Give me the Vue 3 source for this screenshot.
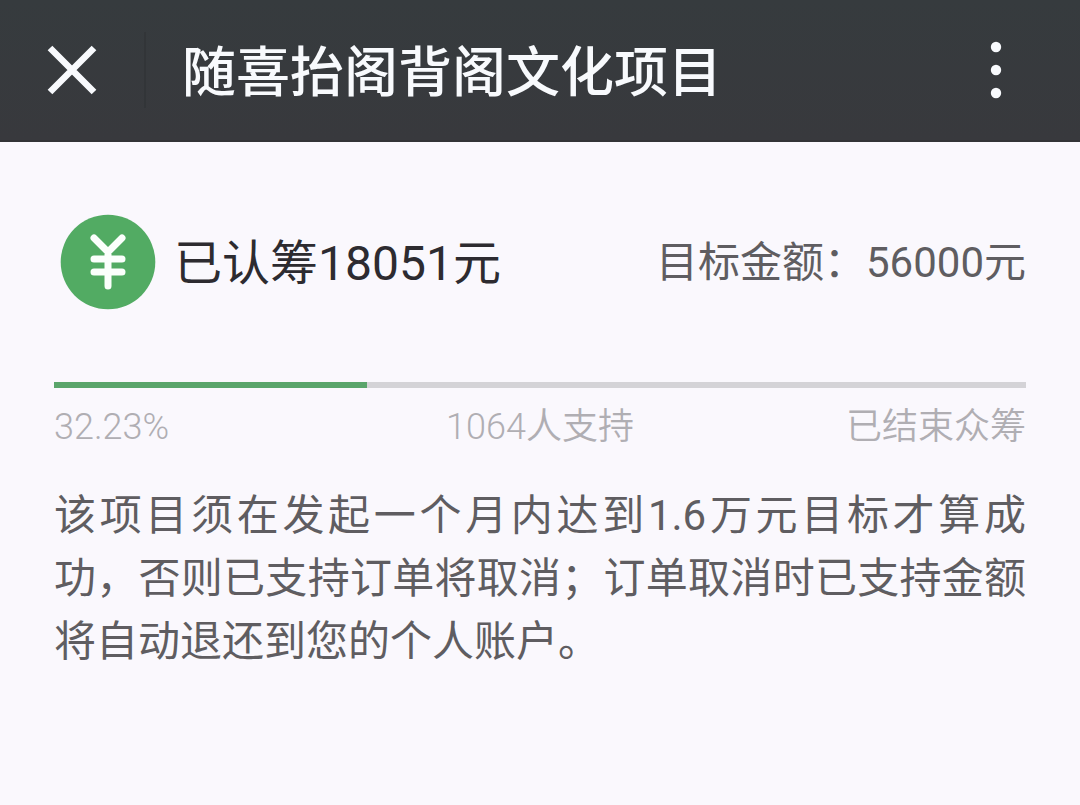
<script setup>
const title = '随喜抬阁背阁文化项目'
const raised = 18051
const goal = 56000
const backers = 1064
const percent = ((raised / goal) * 100).toFixed(2)
</script>

<template>
  <div class="page">
    <header class="bar">
      <button class="close" type="button" aria-label="关闭">
        <svg width="50" height="50" viewBox="0 0 50 50" fill="none" stroke="currentColor" stroke-width="6.6">
          <path d="M3 3 47 47M47 3 3 47" />
        </svg>
      </button>
      <h1 class="title">{{ title }}</h1>
      <button class="more" type="button" aria-label="更多">
        <svg width="12" height="58" viewBox="0 0 12 58" fill="currentColor">
          <circle cx="6" cy="6" r="5.2" />
          <circle cx="6" cy="29" r="5.2" />
          <circle cx="6" cy="52" r="5.2" />
        </svg>
      </button>
    </header>

    <main class="content">
      <section class="amounts">
        <svg class="coin" width="96" height="96" viewBox="0 0 96 96" aria-hidden="true">
          <circle cx="48" cy="48" r="47.3" fill="#52ab63" />
          <path
            d="M34 24 48 38 62 24M48 38V72M34 45H62M34 58H62"
            fill="none"
            stroke="#fbfffc"
            stroke-width="7"
            stroke-linecap="round"
            stroke-linejoin="round"
          />
        </svg>
        <p class="raised">已认筹{{ raised }}元</p>
        <p class="goal">目标金额：{{ goal }}元</p>
      </section>

      <div
        class="track"
        role="progressbar"
        aria-label="认筹进度"
        aria-valuemin="0"
        aria-valuemax="100"
        :aria-valuenow="percent"
      >
        <div class="fill" :style="{ width: percent + '%' }"></div>
      </div>

      <div class="stats">
        <span>{{ percent }}%</span>
        <span>{{ backers }}人支持</span>
        <span class="end">已结束众筹</span>
      </div>

      <p class="note">该项目须在发起一个月内达到1.6万元目标才算成功，否则已支持订单将取消；订单取消时已支持金额将自动退还到您的个人账户。</p>
    </main>
  </div>
</template>

<style>
body {
  margin: 0;
  background: #faf8fd;
}
</style>

<style scoped>
.page {
  min-height: 100vh;
  background: #faf8fd;
  color: #5f5d61;
  font-family: Roboto, "Noto Sans CJK SC", sans-serif;
  font-weight: 400;
}

.bar {
  display: flex;
  align-items: center;
  box-sizing: border-box;
  height: 142px;
  padding: 0 54px 0 0;
  background: linear-gradient(#363b3e, #38393d);
  border-bottom: 2px solid #333337;
  color: #f8fafd;
}

button {
  display: flex;
  align-items: center;
  justify-content: center;
  padding: 0;
  border: 0;
  background: none;
  color: inherit;
}

.close {
  flex: none;
  box-sizing: border-box;
  width: 146px;
  height: 76px;
  border-right: 2px solid #323538;
}

.title {
  flex: 1;
  margin: 0;
  padding: 8px 0 0 36px;
  font-size: 54px;
  line-height: 80px;
  font-weight: 500;
}

.more {
  width: 60px;
  height: 76px;
}

.content {
  padding: 72px 54px;
}

.amounts {
  display: flex;
  align-items: center;
}

.coin {
  flex: none;
  margin: 0 18px 0 6px;
}

p {
  margin: 0;
}

.raised {
  flex: 1;
  padding-top: 4px;
  font-size: 48px;
  line-height: 72px;
  color: #2d2b30;
}

.goal {
  font-size: 42px;
  line-height: 63px;
}

.track {
  height: 6px;
  margin-top: 72px;
  background: #d4d3d7;
}

.fill {
  height: 100%;
  background: #5aa56b;
}

.stats {
  display: grid;
  grid-template-columns: 1fr auto 1fr;
  margin-top: 12px;
  font-size: 36px;
  line-height: 54px;
  font-weight: 350;
  color: #b0aeb3;
}

.end {
  text-align: right;
}

.note {
  margin-top: 30px;
  font-size: 42px;
  line-height: 63px;
  text-align: justify;
}
</style>
